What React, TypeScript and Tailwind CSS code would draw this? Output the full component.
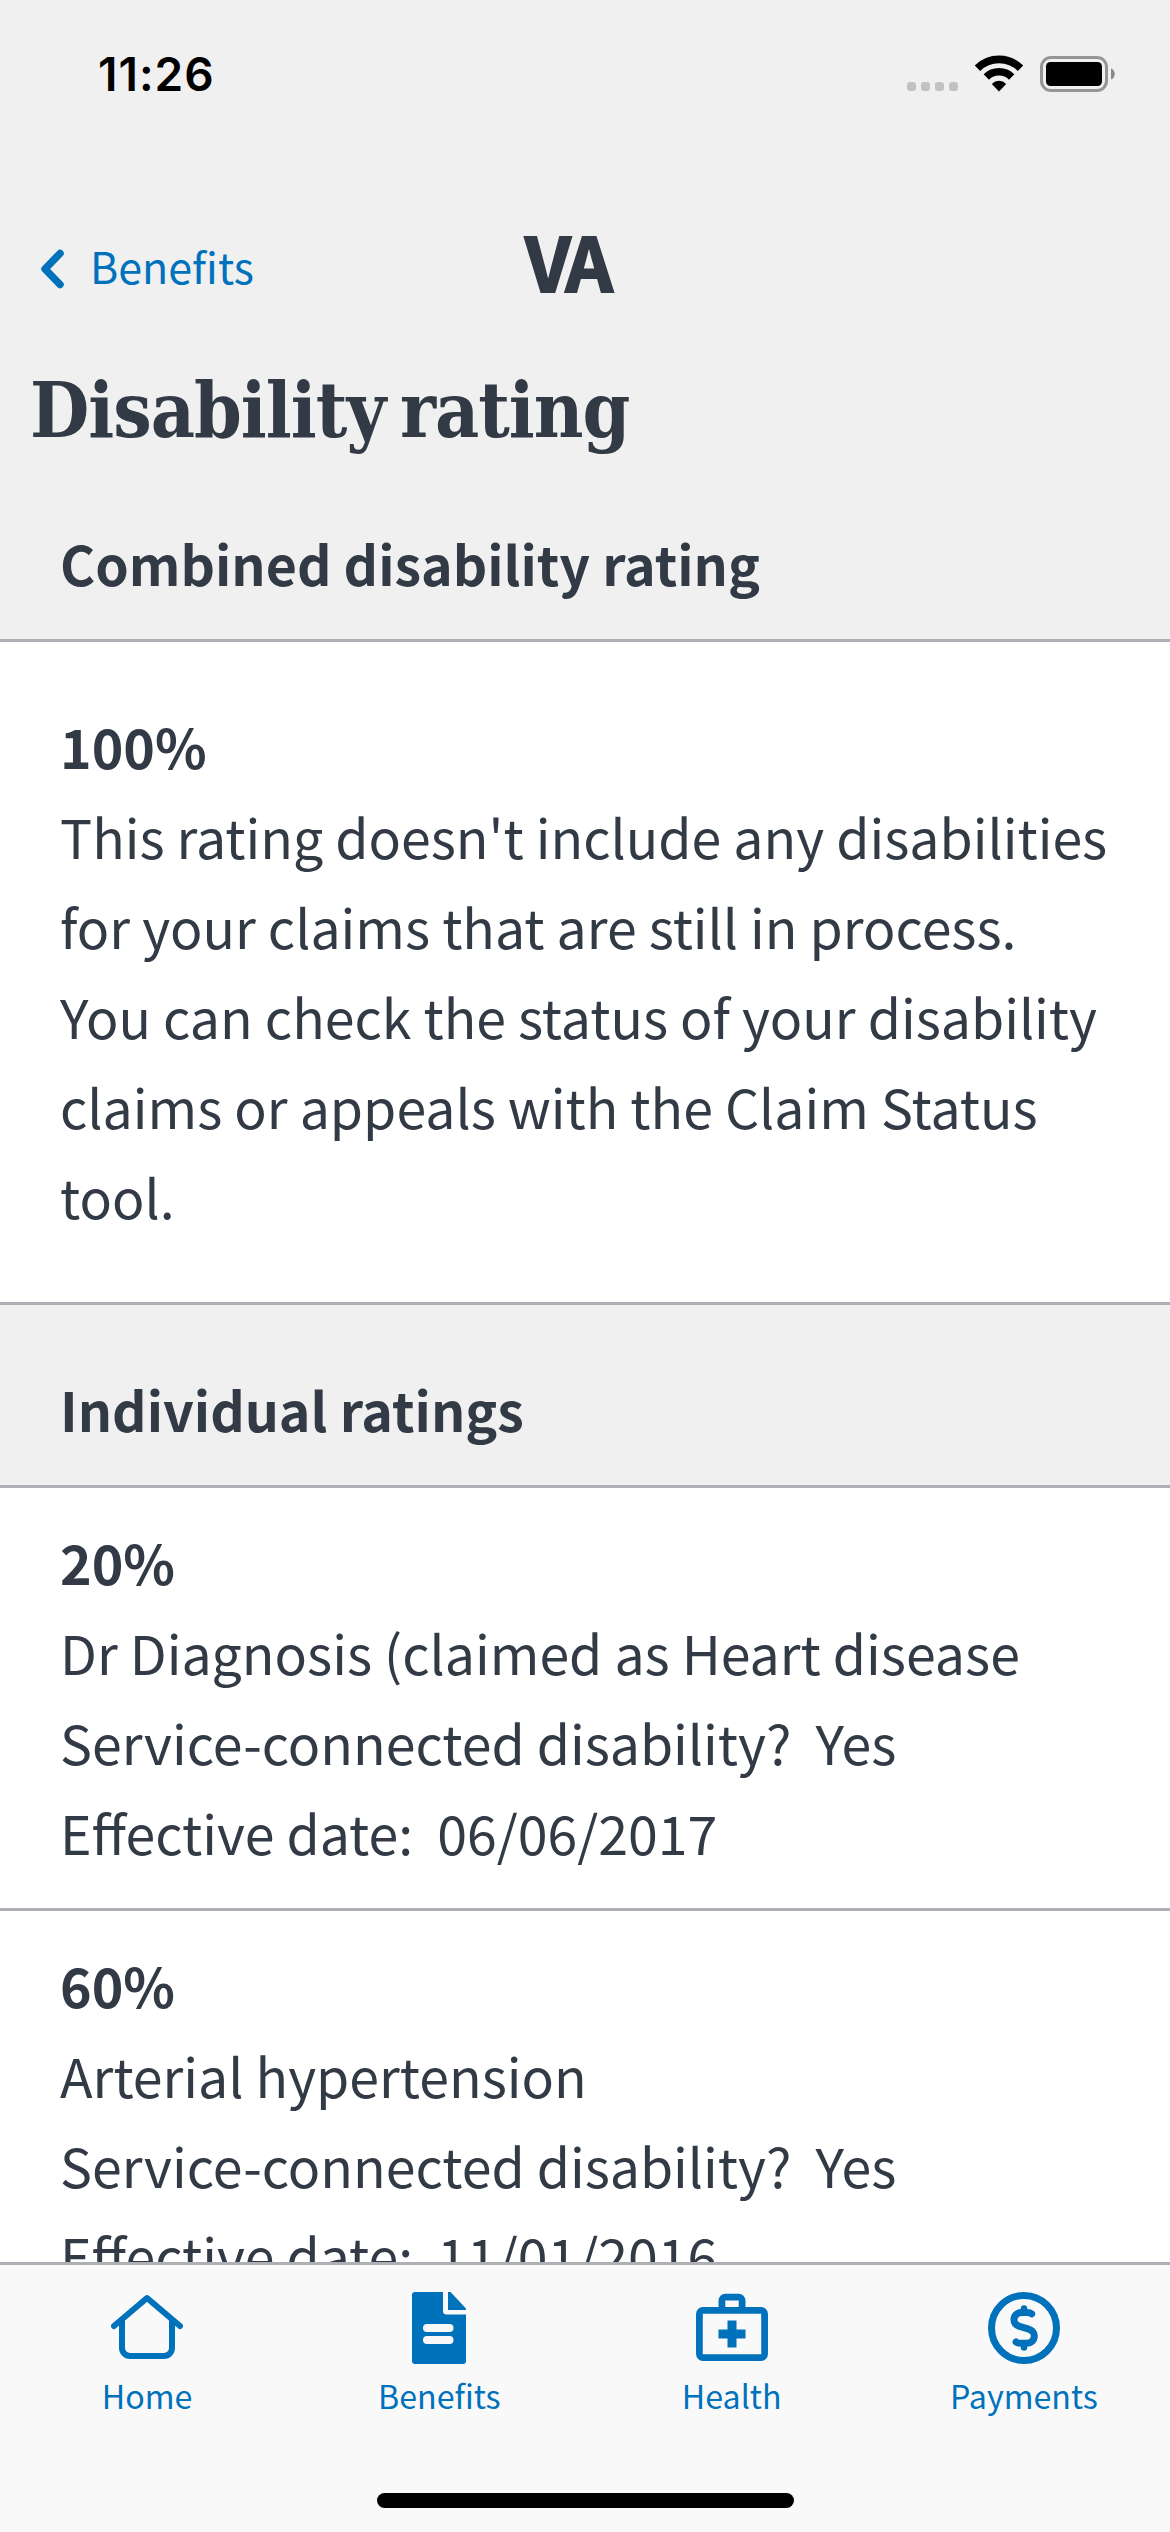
import React from "react";

const BODY = "font-['Noto_Sans_CJK_SC','Noto_Sans',sans-serif]";

function StatusBar() {
  return (
    <div className="flex h-[141px] items-start justify-between pl-[98px] pr-[53px]">
      <div className="mt-[47px] font-['Inter',sans-serif] text-[46px] leading-[54px] font-semibold tracking-[1px] text-black">11:26</div>
      <div className="mt-[54px] flex h-[39px]">
        <div className="mt-[28px] mr-[17px] flex gap-[5px]">
          {[0, 1, 2, 3].map((i) => (
            <span key={i} className="h-[9px] w-[9px] rounded-[3px] bg-[#c2c2c2]" />
          ))}
        </div>
        <svg className="mt-px mr-[17px] h-[37px] w-[48px]" viewBox="0 0 48 37" fill="none" stroke="#000" strokeWidth="7.600">
          <path d="M2.500 13.200a30.500 30.500 0 0 1 43 0" />
          <path d="M11.300 22a18 18 0 0 1 25.400 0" />
          <path d="M24 36.500l-7.200-7.600a10 10 0 0 1 14.400 0z" fill="#000" stroke="none" />
        </svg>
        <svg className="mt-[2px] h-[36px] w-[77px]" viewBox="0 0 77 36">
          <rect x="1.500" y="1.500" width="65" height="33" rx="9.500" fill="none" stroke="#959595" strokeWidth="3" />
          <rect x="6" y="6" width="56" height="24" rx="4.500" fill="#000" />
          <path d="M71 12.500c5 1.500 5 9.500 0 11z" fill="#8a8a8a" />
        </svg>
      </div>
    </div>
  );
}

function Header() {
  return (
    <header className="grid h-[222px] grid-cols-[525px_1fr] items-start">
      <div className="mt-[92px] flex items-center pl-[39px] text-[#0071bb]">
        <svg className="mt-[7px] h-[40px] w-[26px]" viewBox="0 0 26 40" fill="none" stroke="#0071bb" strokeWidth="7.500" strokeLinecap="round" strokeLinejoin="round">
          <path d="M21 4.500L6 20l15 15.500" />
        </svg>
        <span className="ml-[25px] text-[43px] leading-[64px]">Benefits</span>
      </div>
      <div className="mt-[69px] text-[74px] leading-[100px] font-bold tracking-[-4px] [-webkit-text-stroke:2px_#323a45]">VA</div>
    </header>
  );
}

function SectionTitle({ children }: { children: React.ReactNode }) {
  return <h2 className="text-[53.65px] leading-[90px] font-bold">{children}</h2>;
}

type Rating = { percent: string; name: string; date: string };

const ratings: Rating[] = [
  { percent: "20%", name: "Dr Diagnosis (claimed as Heart disease", date: "06/06/2017" },
  { percent: "60%", name: "Arterial hypertension", date: "11/01/2016" },
];

function RatingRow({ percent, name, date }: Rating) {
  return (
    <div className="border-b-[3px] border-[#aeb0b5] bg-white pt-[29px] pr-[30px] pb-[31px] pl-[60px] text-[53.65px] leading-[90px] whitespace-pre">
      <div className="font-bold">{percent}</div>
      <div>{name}</div>
      <div>{"Service-connected disability?  Yes"}</div>
      <div>{`Effective date:  ${date}`}</div>
    </div>
  );
}

function HomeIcon() {
  return (
    <svg className="h-[72px] w-[72px]" viewBox="0 0 72 72" fill="none" stroke="#0071bb" strokeWidth="6" strokeLinecap="round" strokeLinejoin="round">
      <path d="M3 34L36 6l33 28" />
      <path d="M11 28v28a8 8 0 0 0 8 8h34a8 8 0 0 0 8-8V28" strokeLinecap="butt" />
    </svg>
  );
}

function BenefitsIcon() {
  return (
    <svg className="h-[72px] w-[72px]" viewBox="0 0 72 72" fill="#0071bb">
      <path d="M12 0h28v19a3.500 3.500 0 0 0 3.500 3.500H63V69a3 3 0 0 1-3 3H12a3 3 0 0 1-3-3V3a3 3 0 0 1 3-3z" />
      <path d="M45 0h2.500L63 16.500V18H45z" />
      <rect x="20" y="32" width="30.500" height="8" rx="4" fill="#f9f9f9" />
      <rect x="20" y="44" width="30.500" height="8" rx="4" fill="#f9f9f9" />
    </svg>
  );
}

function HealthIcon() {
  return (
    <svg className="h-[72px] w-[72px]" viewBox="0 0 72 72" fill="none" stroke="#0071bb" strokeWidth="6.750">
      <rect x="3.400" y="18.400" width="65.200" height="47.200" rx="3.500" />
      <path d="M25.900 17V8.500a3.500 3.500 0 0 1 3.500-3.500h13.200a3.500 3.500 0 0 1 3.500 3.500V17" />
      <path d="M36 28.500v27M22.500 42h27" strokeWidth="9" />
    </svg>
  );
}

function PaymentsIcon() {
  return (
    <svg className="h-[72px] w-[72px]" viewBox="0 0 72 72" fill="none" stroke="#0071bb" strokeWidth="7" strokeLinecap="round">
      <circle cx="36" cy="36" r="32.500" />
      <path d="M43.700 21.800C42.500 20.700 41 20.500 39 20.500H34c-5 0-8 3-8 7.300 0 4.200 2.500 5.800 6.500 6.900l7.500 2.100c4 1.200 6.300 3 6.300 7 0 4.700-3 7.500-8 7.500h-5c-2.500 0-4.200-.3-5.200-1.300" />
      <path d="M36 16.500v4M36 51.500v4" strokeWidth="6.500" />
    </svg>
  );
}

const tabs = [
  { label: "Home", icon: <HomeIcon /> },
  { label: "Benefits", icon: <BenefitsIcon /> },
  { label: "Health", icon: <HealthIcon /> },
  { label: "Payments", icon: <PaymentsIcon /> },
];

function TabBar() {
  return (
    <nav className="flex h-[270px] shrink-0 flex-col items-center justify-between border-t-[3px] border-[#aeb0b5] bg-[#f9f9f9] pb-[24px]">
      <div className="grid w-full grid-cols-4 pt-[27px] pl-px">
        {tabs.map((t) => (
          <div key={t.label} className="flex flex-col items-center text-[#0071bb]">
            {t.icon}
            <span className="mt-[7px] text-[32.200px] leading-[48px]">{t.label}</span>
          </div>
        ))}
      </div>
      <div className="h-[15px] w-[417px] rounded-full bg-black" />
    </nav>
  );
}

export default function App() {
  return (
    <div className={`flex h-[2532px] w-[1170px] flex-col overflow-hidden bg-[#f0f0f0] text-[#323a45] ${BODY}`}>
      <div className="min-h-0 flex-1 overflow-hidden">
        <StatusBar />
        <Header />
        <h1 className="h-[155px] pl-[30px] font-['DejaVu_Serif_Condensed','DejaVu_Serif',serif] text-[76px] leading-[96px] font-bold tracking-[-1px] [word-spacing:-8px] whitespace-nowrap">
          Disability rating
        </h1>
        <div className="h-[121px] pl-[60px]">
          <SectionTitle>Combined disability rating</SectionTitle>
        </div>
        <section className="h-[666px] border-y-[3px] border-[#aeb0b5] bg-white pt-[59px] pr-[30px] pl-[60px] text-[53.65px] leading-[90px]">
          <div className="font-bold">100%</div>
          <p>
            This rating doesn't include any disabilities
            <br />
            for your claims that are still in process.
            <br />
            You can check the status of your disability
            <br />
            claims or appeals with the Claim Status
            <br />
            tool.
          </p>
        </section>
        <div className="h-[183px] border-b-[3px] border-[#aeb0b5] pt-[59px] pl-[60px]">
          <SectionTitle>Individual ratings</SectionTitle>
        </div>
        {ratings.map((r) => (
          <RatingRow key={r.percent} {...r} />
        ))}
      </div>
      <TabBar />
    </div>
  );
}
